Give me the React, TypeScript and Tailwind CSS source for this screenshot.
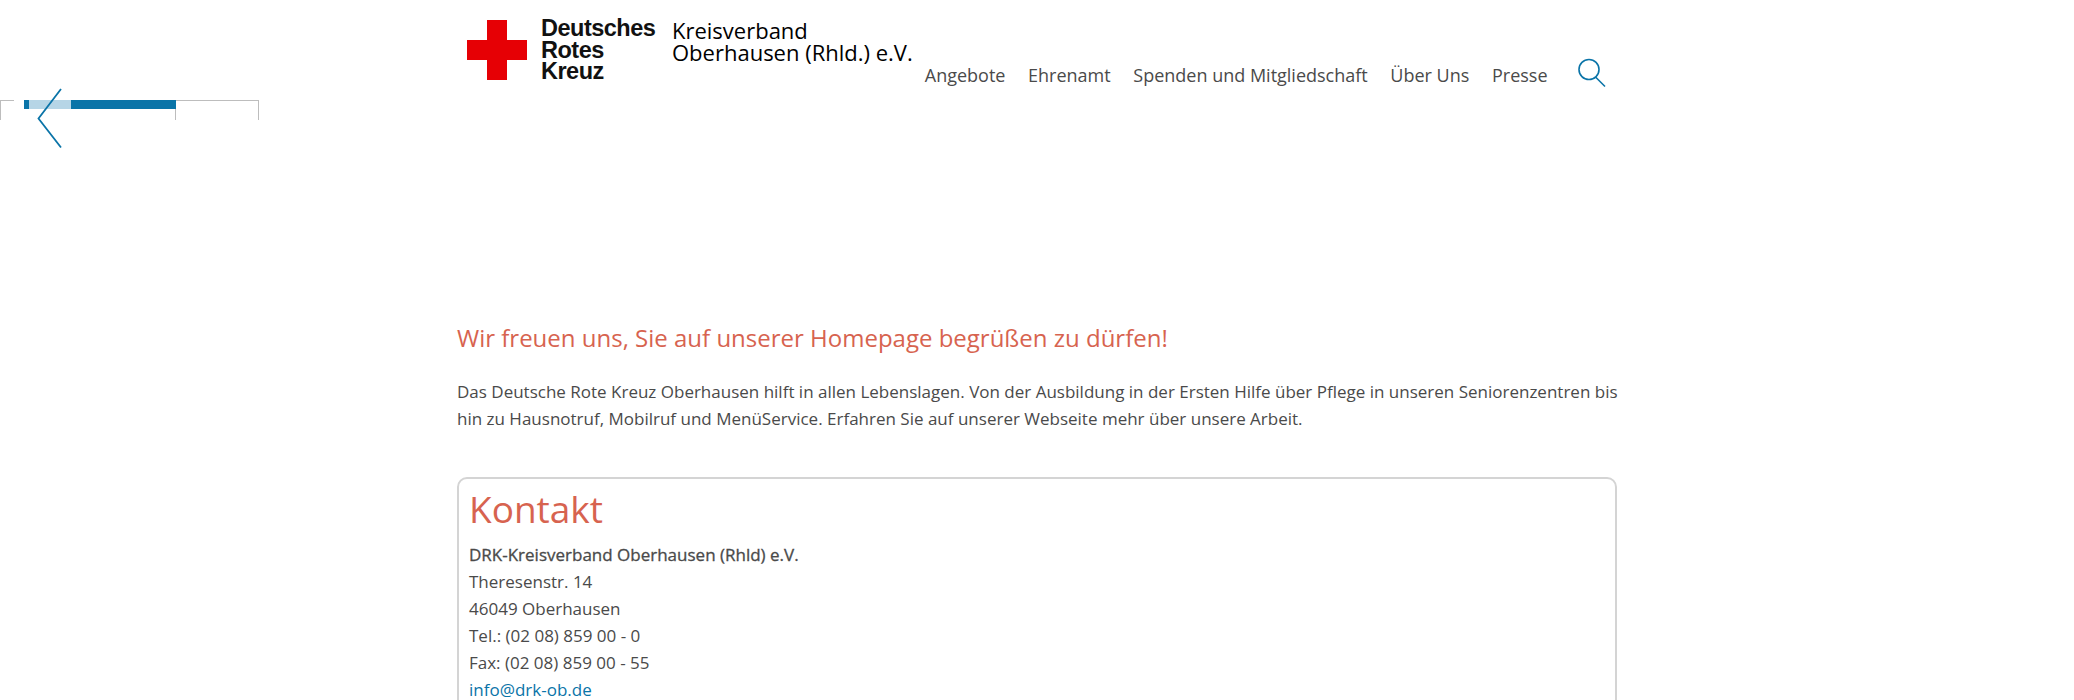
const navItems = ['Angebote', 'Ehrenamt', 'Spenden und Mitgliedschaft', 'Über Uns', 'Presse']

function SliderRemains() {
  return (
    <div className="absolute left-0 top-[88px] h-[60px] w-[260px]">
      <div className="absolute left-0 top-[12px] h-[20px] w-[14px] border-l border-t border-[#bdbdbd]" />
      <div className="absolute left-[175px] top-[12px] h-[20px] w-[84px] border-x border-t border-[#bdbdbd]" />
      <div className="absolute left-[24px] top-[12px] flex h-[9px] w-[152px]">
        <div className="w-[5px] bg-[#0a74a8]" />
        <div className="w-[42px] bg-[#b6d5e6]" />
        <div className="flex-1 bg-[#0a74a8]" />
      </div>
      <svg className="absolute left-[36px] top-0" width="28" height="62" viewBox="0 0 28 62" fill="none">
        <path d="M25 1 L2.5 30.5 L25 59.5" stroke="#0a74a8" strokeWidth="1.8" />
      </svg>
    </div>
  )
}

export default function App() {
  return (
    <div className="relative h-[700px] overflow-hidden bg-white font-['Open_Sans',sans-serif] text-[17px] leading-[27px] text-[#4a4a4a]">
      <SliderRemains />
      <div className="mx-auto w-[1160px]">
        <header className="flex h-[326px] items-start pl-[10px] pt-[20px]">
          <svg className="shrink-0" width="60" height="60" viewBox="0 0 60 60">
            <path d="M20 0 H40 V20 H60 V40 H40 V60 H20 V40 H0 V20 H20 Z" fill="#e60005" />
          </svg>
          <div className="ml-[14px] mt-[-2px] w-[115px] font-['Liberation_Sans',sans-serif] text-[23.5px] leading-[21.5px] font-bold tracking-[-0.5px] text-[#111]">
            <div>Deutsches</div>
            <div>Rotes</div>
            <div>Kreuz</div>
          </div>
          <div className="ml-[16px] mt-[-1px] text-[22px] leading-[22px] text-black">
            <div>Kreisverband</div>
            <div className="whitespace-nowrap">Oberhausen (Rhld.) e.V.</div>
          </div>
          <nav className="ml-[12px] mt-[42px] flex items-start text-[18px] leading-[27px]">
            <div className="flex gap-[22.6px]">
              {navItems.map((item) => (
                <a key={item} className="whitespace-nowrap">
                  {item}
                </a>
              ))}
            </div>
            <svg className="ml-[29px] mt-[-4px]" width="30" height="30" viewBox="0 0 30 30" fill="none" stroke="#0a74a8" strokeWidth="1.6">
              <circle cx="12" cy="11.5" r="10" />
              <path d="M18.5 19 L28 28.5" />
            </svg>
          </nav>
        </header>

        <h2 className="text-[24px] leading-[24px] text-[#d7634f]">Wir freuen uns, Sie auf unserer Homepage begrüßen zu dürfen!</h2>
        <p className="mt-[28px] whitespace-nowrap">
          Das Deutsche Rote Kreuz Oberhausen hilft in allen Lebenslagen. Von der Ausbildung in der Ersten Hilfe über Pflege in unseren Seniorenzentren bis
          <br />
          hin zu Hausnotruf, Mobilruf und MenüService. Erfahren Sie auf unserer Webseite mehr über unsere Arbeit.
        </p>

        <section className="mt-[45px] h-[300px] rounded-[10px] border-2 border-[#d4d4d4] px-[10px] pt-[6px]">
          <h3 className="text-[37px] leading-[48px] text-[#d7634f]">Kontakt</h3>
          <div className="mt-[8px]">
            <div className="font-medium [-webkit-text-stroke:0.3px_#4a4a4a]">DRK-Kreisverband Oberhausen (Rhld) e.V.</div>
            <div>Theresenstr. 14</div>
            <div>46049 Oberhausen</div>
            <div>Tel.: (02 08) 859 00 - 0</div>
            <div>Fax: (02 08) 859 00 - 55</div>
            <a className="text-[#0a74a8]">info@drk-ob.de</a>
          </div>
        </section>
      </div>
    </div>
  )
}
